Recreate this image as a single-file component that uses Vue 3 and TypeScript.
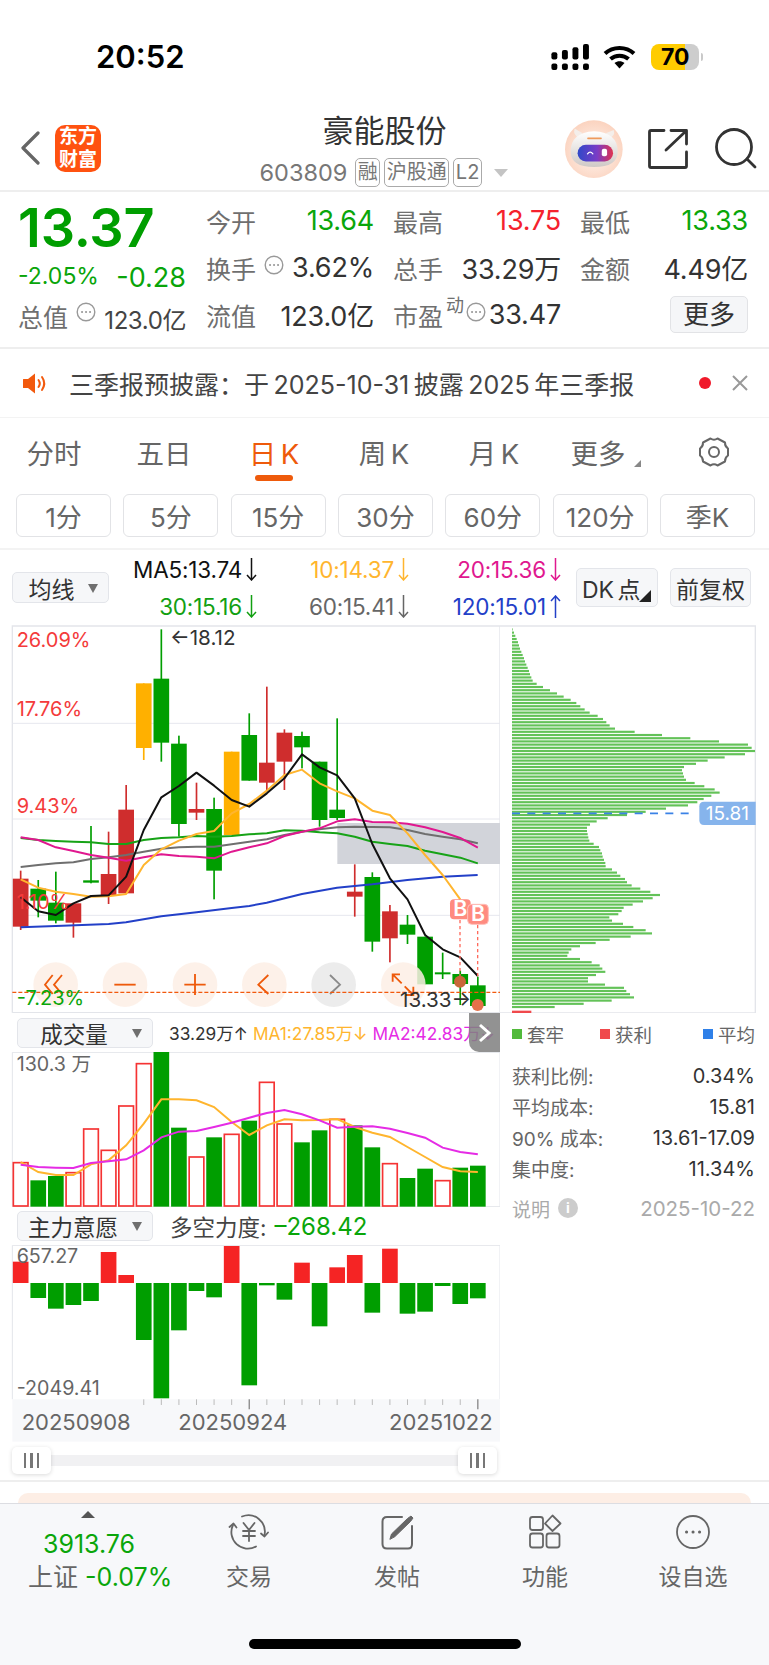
<script setup lang="ts">
// chart svgs use a 3x coordinate space (1500 units = 500px)
const xs = Array.from({ length: 27 }, (_, i) => 62 + i * 52.75)
const GREEN = '#009e00'
const RED = '#cf2d2d'
const ORANGE = '#ffb000'

// color, wick top, wick bottom, body top, body bottom
const candleData: [string, number, number, number, number][] = [
  [RED, 752, 930, 776, 920], [GREEN, 780, 892, 806, 842], [GREEN, 755, 910, 848, 902],
  [RED, 850, 953, 850, 908], [GREEN, 618, 790, 781, 788], [RED, 635, 852, 762, 828],
  [RED, 495, 820, 569, 820], [ORANGE, 190, 420, 190, 384], [GREEN, 28, 425, 176, 368],
  [GREEN, 347, 650, 371, 612], [RED, 488, 600, 567, 578], [GREEN, 533, 838, 567, 752],
  [ORANGE, 395, 645, 395, 645], [GREEN, 280, 482, 345, 482], [RED, 200, 510, 428, 488],
  [RED, 328, 510, 338, 425], [GREEN, 335, 445, 348, 382], [GREEN, 425, 620, 425, 600],
  [GREEN, 295, 600, 569, 594], [RED, 733, 890, 815, 830], [GREEN, 757, 995, 771, 965],
  [RED, 855, 1027, 874, 955], [GREEN, 885, 972, 914, 944], [GREEN, 950, 1093, 950, 1093],
  [GREEN, 998, 1077, 1057, 1063], [GREEN, 1052, 1155, 1062, 1092], [GREEN, 1070, 1160, 1096, 1158],
]
const candles = candleData.map((c, i) => ({ x: xs[i], color: c[0], wt: c[1], wb: c[2], bt: c[3], bb: c[4] }))

function line(vals: number[]) {
  return vals.map((v, i) => `${xs[i]},${v}`).join(' ')
}

const maLines = [
  { color: '#6f6f6f', pts: line([741, 735, 730, 727, 717, 712, 705, 695, 686, 682, 680, 680, 673, 665, 658, 645, 635, 628, 622, 620, 621, 622, 630, 642, 650, 658, 670]) },
  { color: '#17a317', pts: line([654, 660, 663, 665, 667, 672, 672, 660, 654, 652, 648, 650, 648, 643, 640, 631, 632, 637, 640, 650, 665, 672, 678, 692, 703, 713, 730]) },
  { color: '#e0188f', pts: line([652, 660, 682, 693, 705, 713, 722, 712, 703, 708, 710, 715, 695, 682, 670, 648, 635, 625, 604, 598, 606, 607, 611, 622, 636, 654, 683]) },
  { color: '#2340c8', pts: '62,922 167,918 326,912 378,907 484,889 590,877 695,864 748,858 800,848 906,822 1011,803 1117,793 1222,780 1328,770 1433,765' },
  { color: '#ffb52e', pts: line([778, 803, 815, 822, 830, 829, 822, 735, 688, 662, 642, 633, 580, 552, 512, 465, 449, 490, 514, 535, 572, 585, 640, 705, 765, 838]) },
  { color: '#111111', pts: line([832, 874, 885, 850, 828, 826, 770, 630, 532, 498, 458, 497, 540, 560, 520, 475, 403, 442, 466, 535, 672, 775, 838, 945, 988, 1012, 1068]) },
]

const roundBtns = [
  { cx: 167, fill: '#fdeee5' }, { cx: 375, fill: '#fdeee5' }, { cx: 585, fill: '#fdeee5' },
  { cx: 793, fill: '#fdeee5' }, { cx: 1001, fill: '#e9e9e9' }, { cx: 1210, fill: '#fdeee5' },
]

// false = green filled, true = red outline
const volTops = [457, 510, 497, 487, 356, 420, 287, 160, 125, 352, 440, 381, 372, 331, 216, 341, 396, 360, 327, 345, 411, 460, 503, 475, 511, 472, 466]
const volRed = [1, 0, 0, 1, 1, 1, 1, 1, 0, 0, 1, 0, 1, 0, 1, 1, 0, 0, 1, 0, 0, 1, 0, 0, 1, 0, 0]
const volBars = volTops.map((t, i) => ({ x: xs[i], top: t, red: !!volRed[i] }))
const volMa1 = line([455, 485, 494, 494, 462, 450, 405, 340, 267, 267, 270, 290, 335, 374, 345, 327, 330, 329, 326, 350, 367, 380, 410, 440, 470, 483, 485])
const volMa2 = line([463, 470, 472, 473, 458, 453, 447, 420, 381, 364, 362, 350, 337, 322, 308, 299, 312, 330, 352, 349, 348, 355, 368, 382, 412, 425, 432])

const ZERO = 249
const forceVals = [185, 294, 326, 315, 303, 156, 225, 420, 595, 391, 273, 292, 138, 556, 256, 299, 188, 379, 202, 165, 338, 146, 341, 335, 258, 312, 295]
const forceBars = forceVals.map((v, i) => ({ x: xs[i], y: Math.min(v, ZERO), h: Math.abs(v - ZERO), up: v < ZERO }))
const ticks = xs.slice(7).map((x) => ({ x, major: x === xs[13] || x === xs[26] }))

const chipEnds = [38, 42, 46, 50, 54, 57, 60, 64, 68, 72, 75, 79, 83, 87, 90, 94, 98, 110, 129, 150, 171, 191, 212, 229, 241, 254, 269, 293, 309, 319, 329, 345, 404, 486, 571, 657, 744, 755, 765, 735, 674, 623, 588, 552, 546, 549, 552, 558, 584, 613, 644, 659, 634, 611, 592, 564, 498, 437, 381, 323, 290, 270, 261, 261, 263, 265, 268, 281, 297, 301, 306, 308, 312, 316, 317, 336, 351, 361, 375, 381, 395, 421, 451, 480, 458, 429, 398, 371, 365, 355, 328, 336, 369, 400, 437, 456, 392, 329, 287, 240, 214, 206, 202, 240, 275, 299, 307, 316, 288, 264, 264, 315, 372, 379, 390, 402, 335, 251, 164]
const chips = chipEnds.map((e, i) => ({ y: 25 + i * 9.6, w: e - 36 }))

const maRows = [
  { text: 'MA5:13.74', color: '#111', down: true },
  { text: '10:14.37', color: '#ffb52e', down: true },
  { text: '20:15.36', color: '#e0188f', down: true },
  { text: '30:15.16', color: '#12a012', down: true },
  { text: '60:15.41', color: '#666', down: true },
  { text: '120:15.01', color: '#2340c8', down: false },
]
const tabs = ['分时', '五日', '日 K', '周 K', '月 K']
const periods = ['1分', '5分', '15分', '30分', '60分', '120分', '季K']
const infoRows = [
  { k: '获利比例:', v: '0.34%' },
  { k: '平均成本:', v: '15.81' },
  { k: '90% 成本:', v: '13.61-17.09' },
  { k: '集中度:', v: '11.34%' },
]
</script>

<template>
  <div class="page">
    <div class="status">
      <span class="time">20:52</span>
      <div class="status-right">
        <svg width="38" height="26" viewBox="33 27 113 79" fill="#000">
          <rect x="33" y="86" width="18" height="20" rx="6" /><rect x="65" y="86" width="18" height="20" rx="6" />
          <rect x="97" y="86" width="18" height="20" rx="6" /><rect x="129" y="86" width="18" height="20" rx="6" />
          <rect x="33" y="52" width="18" height="22" rx="6" /><rect x="65" y="45" width="18" height="29" rx="6" />
          <rect x="97" y="37" width="18" height="37" rx="6" /><rect x="129" y="27" width="18" height="47" rx="6" />
        </svg>
        <svg class="wifi" width="33" height="24" viewBox="0 0 33 24" fill="none" stroke="#000" stroke-width="4">
          <path d="M2 8.5C10 1 23 1 31 8.5" />
          <path d="M7.5 14C12.5 9.5 20.5 9.5 25.5 14" />
          <path d="M16.5 23.5L11.5 18C14.5 15.7 18.5 15.7 21.5 18Z" fill="#000" stroke="none" />
        </svg>
        <div class="battery"><span>70</span></div>
        <i class="bat-cap"></i>
      </div>
    </div>

    <div class="nav">
      <div class="nav-left">
        <svg width="19" height="34" viewBox="0 0 19 34" fill="none" stroke="#666" stroke-width="3.2" stroke-linecap="round" stroke-linejoin="round">
          <path d="M17 2L2 17L17 32" />
        </svg>
        <div class="logo"><span>东方</span><span>财富</span></div>
      </div>
      <div class="nav-title">
        <div class="title">豪能股份</div>
        <div class="sub">
          <span class="code">603809</span>
          <span class="tag">融</span>
          <span class="tag">沪股通</span>
          <span class="tag">L2</span>
          <i class="sub-caret"></i>
        </div>
      </div>
      <div class="nav-right">
        <svg width="58" height="58" viewBox="75 250 175 175">
          <defs>
            <radialGradient id="robotBg" cx="50%" cy="55%" r="55%">
              <stop offset="0%" stop-color="#fff6f1" />
              <stop offset="100%" stop-color="#fbd3bf" />
            </radialGradient>
            <linearGradient id="visor" x1="0" x2="1" y1="0" y2="0">
              <stop offset="0%" stop-color="#2f49c9" />
              <stop offset="55%" stop-color="#7a3cc6" />
              <stop offset="100%" stop-color="#e0324f" />
            </linearGradient>
            <linearGradient id="robotHead" x1="0" x2="0" y1="0" y2="1">
              <stop offset="0%" stop-color="#ffffff" />
              <stop offset="100%" stop-color="#cfc9c6" />
            </linearGradient>
          </defs>
          <circle cx="162" cy="338" r="87" fill="url(#robotBg)" />
          <path d="M104 276Q98 296 118 304L128 290ZM222 280Q228 298 208 304L198 290Z" fill="#f4eeea" />
          <path d="M92 345Q92 288 163 284Q234 288 234 345Q234 392 163 392Q92 392 92 345Z" fill="url(#robotHead)" />
          <rect x="142" y="303" width="44" height="5" rx="2" fill="#ef9a5c" />
          <rect x="113" y="325" width="107" height="50" rx="25" fill="url(#visor)" />
          <path d="M143 352Q151 342 159 352" fill="none" stroke="#fff" stroke-width="4" stroke-linecap="round" />
          <rect x="186" y="337" width="16" height="22" rx="6" fill="#fff" />
        </svg>
        <svg class="share" width="40" height="40" viewBox="0 0 40 40" fill="none" stroke="#333" stroke-width="2.8" stroke-linecap="round" stroke-linejoin="round">
          <path d="M16 1.5H3Q1.5 1.5 1.5 3V37Q1.5 38.5 3 38.5H37Q38.5 38.5 38.5 37V23" />
          <path d="M18 21L38 2M23 1.5H38.5V15" />
        </svg>
        <svg class="search" width="44" height="42" viewBox="0 0 44 42" fill="none" stroke="#333" stroke-width="2.8" stroke-linecap="round">
          <circle cx="20" cy="19" r="17.5" />
          <path d="M33 31L41 39" />
        </svg>
      </div>
    </div>

    <div class="quote">
      <div class="q-left">
        <div class="price">13.37</div>
        <div class="q-change"><span class="pct">-2.05%</span><span class="chg">-0.28</span></div>
        <div class="q-total">
          <span class="lab">总值</span>
          <svg class="dots" width="20" height="20" viewBox="0 0 20 20" fill="none" stroke="#999" stroke-width="1.4"><circle cx="10" cy="10" r="8.8" /><path d="M6 10h.1M10 10h.1M14 10h.1" stroke-width="2" stroke-linecap="round" /></svg>
          <span class="total-val">123.0亿</span>
        </div>
      </div>
      <div class="q-grid">
        <div class="cell"><span class="lab">今开</span><span class="val green">13.64</span></div>
        <div class="cell"><span class="lab">最高</span><span class="val red">13.75</span></div>
        <div class="cell"><span class="lab">最低</span><span class="val green">13.33</span></div>
        <div class="cell">
          <span class="lab with-icon">换手
            <svg class="dots" width="20" height="20" viewBox="0 0 20 20" fill="none" stroke="#999" stroke-width="1.4"><circle cx="10" cy="10" r="8.8" /><path d="M6 10h.1M10 10h.1M14 10h.1" stroke-width="2" stroke-linecap="round" /></svg>
          </span>
          <span class="val">3.62%</span>
        </div>
        <div class="cell"><span class="lab">总手</span><span class="val">33.29万</span></div>
        <div class="cell"><span class="lab">金额</span><span class="val">4.49亿</span></div>
        <div class="cell"><span class="lab">流值</span><span class="val">123.0亿</span></div>
        <div class="cell">
          <span class="lab with-icon tight">市盈<sup class="dyn">动</sup>
            <svg class="dots" width="20" height="20" viewBox="0 0 20 20" fill="none" stroke="#999" stroke-width="1.4"><circle cx="10" cy="10" r="8.8" /><path d="M6 10h.1M10 10h.1M14 10h.1" stroke-width="2" stroke-linecap="round" /></svg>
          </span>
          <span class="val">33.47</span>
        </div>
        <div class="cell end"><button class="more">更多</button></div>
      </div>
    </div>

    <div class="notice">
      <svg width="26" height="21" viewBox="0 0 26 21" fill="#f2590d" class="speaker">
        <path d="M1 6.5Q1 6 1.5 6H6L13 .5V20.5L6 15H1.5Q1 15 1 14.5Z" />
        <path d="M16.5 7Q19 10.5 16.5 14M20 4Q24.5 10.5 20 17" fill="none" stroke="#f2590d" stroke-width="2" stroke-linecap="round" />
      </svg>
      <span class="notice-text">三季报预披露：于 2025-10-31 披露 2025 年三季报</span>
      <i class="red-dot"></i>
      <svg width="16" height="16" viewBox="0 0 16 16" stroke="#999" stroke-width="2" class="close"><path d="M1 1L15 15M15 1L1 15" /></svg>
    </div>

    <div class="tabs">
      <div v-for="(t, i) in tabs" :key="t" class="tab" :class="{ active: i === 2 }">
        <span>{{ t }}</span>
      </div>
      <div class="tab">
        <span class="tab-more">更多</span><i class="tab-caret"></i>
      </div>
      <div class="tab">
        <svg width="32" height="32" viewBox="0 0 32 32" fill="none" stroke="#666" stroke-width="2" stroke-linejoin="round">
          <path d="M12.5 2.5Q16 5 19.5 2.5L27 6.5Q26.8 10.5 30 12.5V19.5Q26.8 21.5 27 25.5L19.5 29.5Q16 27 12.5 29.5L5 25.5Q5.2 21.5 2 19.5V12.5Q5.2 10.5 5 6.5Z" />
          <circle cx="16" cy="16" r="5" />
        </svg>
      </div>
    </div>

    <div class="periods">
      <button v-for="p in periods" :key="p" class="period">{{ p }}</button>
    </div>

    <div class="ma-bar">
      <div class="sel ma-sel"><span>均线</span><i class="caret"></i></div>
      <div class="ma-grid">
        <span v-for="m in maRows" :key="m.text" class="ma-item" :style="{ color: m.color }">
          {{ m.text }}
          <svg width="11" height="23" viewBox="0 0 11 23" fill="none" :stroke="m.color" stroke-width="1.5">
            <path v-if="m.down" d="M5.5 0V22M1 17L5.5 22L10 17" />
            <path v-else d="M5.5 23V1M1 6L5.5 1L10 6" />
          </svg>
        </span>
      </div>
      <div class="sel dk"><span>DK 点</span><i class="corner"></i></div>
      <div class="sel fq"><span>前复权</span></div>
    </div>

    <div class="charts">
      <div class="charts-left">
        <svg class="main-chart" width="500" height="393.33" viewBox="0 0 1500 1180">
          <path d="M37 1178V18H1500V1178M37 1178H1500" fill="none" stroke="#e3e5ea" stroke-width="4" />
          <path d="M37 310H1500M37 597H1500M37 886H1500" stroke="#e6e7ee" stroke-width="3" />
          <rect x="1012" y="609" width="488" height="123" fill="#d2d4da" />
          <g v-for="c in candles" :key="c.x">
            <rect :x="c.x - 2.5" :y="c.wt" width="5" :height="c.wb - c.wt" :fill="c.color" />
            <rect :x="c.x - 23.5" :y="c.bt" width="47" :height="c.bb - c.bt" :fill="c.color" />
          </g>
          <polyline v-for="l in maLines" :key="l.color" :points="l.pts" fill="none" :stroke="l.color" stroke-width="6" stroke-linejoin="round" />

          <text x="50" y="80" class="pct-red">26.09%</text>
          <text x="50" y="288" class="pct-red">17.76%</text>
          <text x="50" y="578" class="pct-red">9.43%</text>
          <text x="50" y="868" class="pct-red">1.10%</text>
          <text x="510" y="74" class="price-note">←18.12</text>

          <g v-for="b in roundBtns" :key="b.cx">
            <circle :cx="b.cx" cy="1094" r="67" :fill="b.fill" opacity=".85" />
          </g>
          <g fill="none" stroke="#ee5a0b" stroke-width="5.5">
            <path d="M158 1065L135 1094L158 1122M186 1065L162 1094L186 1122" />
            <path d="M343 1094H407" />
            <path d="M553 1094H617M585 1062V1125" />
            <path d="M805 1065L775 1094L805 1122" />
            <path d="M1178 1085V1063H1200M1178 1063L1205 1090M1240 1100V1125H1216M1240 1125L1214 1099" />
          </g>
          <path d="M990 1065L1020 1094L990 1122" fill="none" stroke="#8a8a8a" stroke-width="5.5" />

          <path d="M37 1117H1500" stroke="#f2590d" stroke-width="4" stroke-dasharray="12 6" />
          <path d="M1380 900V1085M1433 915V1070" stroke="#ff6a5c" stroke-width="4" stroke-dasharray="10 8" />
          <circle cx="1380" cy="1085" r="18" fill="#c9673a" />
          <circle cx="1433" cy="1155" r="18" fill="#e5714a" />
          <rect x="1350" y="838" width="62" height="60" rx="12" fill="#ff8b80" />
          <rect x="1403" y="853" width="62" height="60" rx="12" fill="#ff8b80" stroke="#ffc0ba" stroke-width="3" />
          <text x="1381" y="888" class="bb">B</text>
          <text x="1434" y="904" class="bb">B</text>
          <text x="50" y="1155" class="pct-green">-7.23%</text>
          <text x="1200" y="1162" class="price-note">13.33→</text>
        </svg>

        <div class="sub-head vol-head">
          <div class="sel sub-sel"><span>成交量</span><i class="caret"></i></div>
          <span class="vol-t dark">33.29万↑</span>
          <span class="vol-t amber">MA1:27.85万↓</span>
          <span class="vol-t pink">MA2:42.83万↓</span>
          <div class="expand">
            <svg width="14" height="20" viewBox="0 0 14 20" fill="none" stroke="#fff" stroke-width="3"><path d="M2 2L11 10L2 18" /></svg>
          </div>
        </div>
        <svg class="vol-chart" width="500" height="155" viewBox="0 125 1500 465">
          <path d="M37 589V126H1500V589H37" fill="none" stroke="#e3e5ea" stroke-width="3" />
          <g v-for="b in volBars" :key="b.x">
            <rect v-if="b.red" :x="b.x - 22" :y="b.top" width="44" :height="587 - b.top" fill="#fff" stroke="#f53333" stroke-width="5" />
            <rect v-else :x="b.x - 23.5" :y="b.top" width="47" :height="589 - b.top" :fill="GREEN" />
          </g>
          <polyline :points="volMa1" fill="none" stroke="#ffb52e" stroke-width="6" />
          <polyline :points="volMa2" fill="none" stroke="#e52be5" stroke-width="6" />
          <text x="50" y="183" class="axis">130.3 万</text>
        </svg>

        <div class="sub-head force-head">
          <div class="sel sub-sel force-sel"><span>主力意愿</span><i class="caret"></i></div>
          <span class="force-t">多空力度:</span>
          <span class="force-v">–268.42</span>
        </div>
        <svg class="force-chart" width="500" height="196.67" viewBox="0 135 1500 590">
          <path d="M37 598V136H1500V598" fill="none" stroke="#e3e5ea" stroke-width="3" />
          <rect v-for="b in forceBars" :key="b.x" :x="b.x - 23.5" :y="b.y" width="47" :height="b.h" :fill="b.up ? '#f52424' : GREEN" />
          <rect x="37" y="598" width="1463" height="127" fill="#f7f8fa" />
          <path v-for="t in ticks" :key="t.x" :d="`M${t.x} 598V${t.major ? 628 : 615}`" :stroke="t.major ? '#888' : '#bbb'" :stroke-width="t.major ? 4 : 3" />
          <text x="50" y="190" class="axis">657.27</text>
          <text x="50" y="585" class="axis">-2049.41</text>
          <text x="65" y="690" class="date">20250908</text>
          <text x="535" y="690" class="date">20250924</text>
          <text x="1167" y="690" class="date">20251022</text>
        </svg>

        <div class="slider">
          <div class="handle"><i></i><i></i><i></i></div>
          <div class="handle"><i></i><i></i><i></i></div>
        </div>
      </div>

      <div class="charts-right">
        <svg class="chip-chart" width="269" height="393.33" viewBox="0 0 807 1180">
          <path d="M0 18H766V1179H0" fill="none" stroke="#e3e5ea" stroke-width="4" />
          <rect v-for="c in chips" :key="c.y" x="36" :y="c.y" :width="c.w" height="6.5" fill="#63c258" />
          <rect x="36" y="1172" width="58" height="7" fill="#f0494c" />
          <path d="M36 580H578" stroke="#3b82e6" stroke-width="5" stroke-dasharray="24 22" />
          <path d="M612 545H767V615H612Q598 615 598 601V559Q598 545 612 545Z" fill="#86b4ec" />
          <text x="682" y="600" class="chip-price">15.81</text>
        </svg>
        <div class="legend">
          <span class="leg"><i class="sq sq-green"></i>套牢</span>
          <span class="leg"><i class="sq sq-red"></i>获利</span>
          <span class="leg"><i class="sq sq-blue"></i>平均</span>
        </div>
        <div class="info">
          <div v-for="r in infoRows" :key="r.k" class="info-row"><span>{{ r.k }}</span><b>{{ r.v }}</b></div>
        </div>
        <div class="explain">
          <span>说明</span><i class="info-i">i</i><span class="explain-date">2025-10-22</span>
        </div>
      </div>
    </div>

    <div class="rule"></div>
    <div class="peach"></div>

    <div class="bottom">
      <div class="bottom-grid">
        <div class="index">
          <i class="up"></i>
          <span class="idx-v">3913.76</span>
          <span class="idx-n">上证 <em>-0.07%</em></span>
        </div>
        <div class="act">
          <svg width="44" height="40" viewBox="0 0 44 40" fill="none" stroke="#666" stroke-width="1.8" stroke-linecap="round" stroke-linejoin="round">
            <path d="M15 4.5A16.5 16.5 0 0 1 37.5 23M29 34.5A16.5 16.5 0 0 1 6 13" />
            <path d="M2.5 15L6.5 11.5L9.5 15.5M34 21.5L37.5 24.5L41 20.5" />
            <path d="M16.5 11L22 18L27.5 11M22 18V29M16 19H28M16 24H28" />
          </svg>
          <span>交易</span>
        </div>
        <div class="act">
          <svg width="40" height="40" viewBox="0 0 40 40" fill="none" stroke="#666" stroke-width="2" stroke-linecap="round">
            <path d="M25 5H10Q5.5 5 5.5 9.5V32Q5.5 36.5 10 36.5H31Q35 36.5 35 32V14" />
            <path d="M13 27L14.5 22L30.5 6.5L34 4L36 6L33.5 9.5L18 24.5Z" fill="#666" stroke-width="1" />
          </svg>
          <span>发帖</span>
        </div>
        <div class="act">
          <svg width="40" height="40" viewBox="0 0 40 40" fill="none" stroke="#666" stroke-width="1.8" stroke-linejoin="round">
            <rect x="5" y="5" width="13" height="13" rx="2.5" />
            <rect x="5" y="21.5" width="13" height="14" rx="2.5" />
            <rect x="21.5" y="21.5" width="13" height="14" rx="2.5" />
            <path d="M27.5 3.5L35.5 11.5L27.5 19L20 11.5Z" />
          </svg>
          <span>功能</span>
        </div>
        <div class="act">
          <svg width="40" height="40" viewBox="0 0 40 40" fill="none" stroke="#666" stroke-width="1.8">
            <circle cx="20" cy="20" r="16" />
            <path d="M13.5 20h.1M20 20h.1M26.5 20h.1" stroke-width="3" stroke-linecap="round" />
          </svg>
          <span>设自选</span>
        </div>
      </div>
      <div class="home"></div>
    </div>
  </div>
</template>

<style>
html,
body {
  margin: 0;
  background: #fff;
}
</style>

<style scoped>
.page {
  width: 769px;
  height: 1665px;
  overflow: hidden;
  background: #fff;
  font-family: Inter, "Noto Sans CJK SC", sans-serif;
  color: #333;
}
i {
  display: block;
  font-style: normal;
}
button {
  font: inherit;
  padding: 0;
}

/* status bar */
.status {
  height: 108px;
  box-sizing: border-box;
  padding: 38px 66px 0 96px;
  display: flex;
  justify-content: space-between;
  align-items: flex-start;
}
.time {
  font-size: 31px;
  font-weight: 600;
  line-height: 38px;
  color: #000;
}
.status-right {
  display: flex;
  align-items: center;
  height: 38px;
}
.wifi {
  margin-left: 14px;
}
.battery {
  margin-left: 15px;
  width: 48px;
  height: 26px;
  border-radius: 8px;
  background: linear-gradient(90deg, #ffcc00 71%, #cdcdcd 71%);
  font-size: 23px;
  font-weight: 700;
  line-height: 26px;
  color: #000;
  padding-left: 10px;
  box-sizing: border-box;
}
.bat-cap {
  width: 2px;
  height: 8px;
  margin-left: 2px;
  background: #c9c9c9;
  border-radius: 0 2px 2px 0;
}

/* nav */
.nav {
  height: 82px;
  display: grid;
  grid-template-columns: 1fr 250px 1fr;
  border-bottom: 2px solid #eeeeee;
}
.nav-left {
  display: flex;
  align-items: center;
  padding: 0 0 2px 21px;
  gap: 15px;
}
.logo {
  width: 46px;
  height: 47px;
  border-radius: 10px;
  background: #ff5210;
  color: #fff;
  font-size: 19px;
  font-weight: 700;
  line-height: 23px;
  display: flex;
  flex-direction: column;
  align-items: center;
  justify-content: center;
}
.nav-title {
  text-align: center;
}
.title {
  font-size: 31px;
  line-height: 46px;
  color: #333;
}
.sub {
  display: flex;
  align-items: center;
  justify-content: flex-start;
  gap: 4px;
  color: #777;
  margin-top: 4px;
  height: 29px;
}
.code {
  font-size: 23.5px;
  margin-right: 4px;
}
.tag {
  height: 27px;
  border: 1.5px solid #aaa;
  border-radius: 5px;
  padding: 0 1.5px;
  font-size: 20px;
  line-height: 27px;
}
.sub-caret {
  width: 0;
  height: 0;
  border: 7px solid transparent;
  border-top: 8px solid #c4c4c4;
  border-bottom: 0;
  margin-left: 8px;
}
.nav-right {
  display: flex;
  align-items: center;
  justify-content: flex-end;
  padding: 0 11px 0 0;
  margin-left: -4px;
}
.share {
  margin-left: 25px;
}
.search {
  margin-left: 26px;
}

/* quote */
.quote {
  height: 155px;
  border-bottom: 2px solid #eeeeee;
  display: flex;
  padding-left: 18px;
}
.q-left {
  width: 168px;
  margin-right: 20px;
  display: flex;
  flex-direction: column;
}
.price {
  font-size: 54px;
  font-weight: 600;
  color: #009e00;
  line-height: 60px;
  margin-top: 6px;
  height: 58px;
  letter-spacing: -0.2px;
}
.q-change {
  height: 40px;
  display: flex;
  justify-content: space-between;
  align-items: center;
  color: #09a509;
}
.pct {
  font-size: 23px;
}
.chg {
  font-size: 27px;
  margin-top: 3px;
}
.q-total {
  height: 36px;
  display: flex;
  align-items: center;
  margin-top: 2px;
}
.q-total .dots {
  margin-left: 8px;
  top: -4px;
}
.total-val {
  font-size: 24px;
  margin-left: auto;
  margin-top: 4px;
  color: #444;
  letter-spacing: -0.4px;
}
.lab {
  font-size: 25px;
  color: #6f6f6f;
  white-space: nowrap;
}
.with-icon {
  display: inline-flex;
  align-items: center;
  gap: 8px;
}
.with-icon.tight {
  gap: 2px;
}
.dots {
  position: relative;
  top: -3px;
  flex: none;
}
.dyn {
  font-size: 18px;
  line-height: 18px;
  position: relative;
  top: -9px;
  vertical-align: baseline;
  margin-left: 1px;
}
.q-grid {
  display: grid;
  grid-template-columns: repeat(3, 168px);
  grid-auto-rows: 47px;
  column-gap: 19px;
  padding-top: 5px;
}
.cell {
  display: flex;
  justify-content: space-between;
  align-items: center;
}
.cell.end {
  justify-content: flex-end;
}
.val {
  font-size: 27px;
  color: #333;
  white-space: nowrap;
  letter-spacing: -0.2px;
}
.val.green {
  color: #0aa60a;
}
.val.red {
  color: #f5222d;
}
.more {
  width: 78px;
  height: 37px;
  background: #f5f6f8;
  border: 1.5px solid #e2e3e6;
  border-radius: 5px;
  font-size: 26px;
  color: #333;
  line-height: 33px;
}

/* notice */
.notice {
  height: 68px;
  border-bottom: 1px solid #f3f3f3;
  display: flex;
  align-items: center;
  padding-left: 22px;
}
.notice-text {
  margin-left: 21px;
  width: 630px;
  font-size: 25px;
  word-spacing: -2.5px;
  color: #444;
  white-space: nowrap;
}
.red-dot {
  width: 12px;
  height: 12px;
  border-radius: 50%;
  background: #f0192a;
}
.close {
  margin-left: 21px;
}

/* tabs */
.tabs {
  height: 71px;
  display: grid;
  grid-template-columns: repeat(7, 110px);
  margin-left: -1px;
}
.tab {
  position: relative;
  display: flex;
  align-items: center;
  justify-content: center;
  font-size: 27.5px;
  word-spacing: -3px;
  color: #666;
  padding-bottom: 4px;
  box-sizing: border-box;
}
.tab.active {
  color: #ee5a0b;
}
.tab.active::after {
  content: "";
  position: absolute;
  left: 36px;
  width: 38px;
  height: 6px;
  bottom: 8px;
  border-radius: 3px;
  background: #ee5a0b;
}
.tab-more {
  margin-right: 12px;
}
.tab-caret {
  position: absolute;
  left: 85px;
  top: 42px;
  border-style: solid;
  border-width: 0 0 7px 7px;
  border-color: transparent transparent #888 transparent;
}

/* periods */
.periods {
  display: flex;
  gap: 12.33px;
  padding: 5px 0 0 16px;
  height: 43px;
}
.period {
  width: 95px;
  height: 43px;
  background: #fff;
  border: 1.5px solid #e2e3e6;
  border-radius: 6px;
  font-size: 26px;
  color: #666;
}

/* ma row */
.ma-bar {
  margin-top: 11px;
  height: 70px;
  border-top: 2px solid #f3f3f3;
  display: flex;
  align-items: flex-start;
  padding-left: 12px;
}
.sel {
  box-sizing: border-box;
  background: #f6f7f9;
  border: 1.5px solid #e3e5ea;
  border-radius: 5px;
  display: flex;
  align-items: center;
  justify-content: center;
  position: relative;
  color: #333;
  font-size: 23px;
}
.ma-sel {
  width: 97px;
  height: 31px;
  margin-top: 22px;
  padding-right: 18px;
}
.caret {
  position: absolute;
  right: 10px;
  top: 50%;
  margin-top: -4px;
  border-style: solid;
  border-width: 9px 5px 0;
  border-color: #6f6f6f transparent transparent;
}
.ma-grid {
  width: 442px;
  margin-left: 10px;
  display: grid;
  grid-template-columns: 138px 152px 152px;
  grid-auto-rows: 37px;
  padding-top: 1px;
}
.ma-item {
  display: flex;
  justify-content: flex-end;
  align-items: center;
  gap: 4px;
  font-size: 22.5px;
  white-space: nowrap;
  letter-spacing: -0.2px;
}
.dk {
  width: 82px;
  height: 39px;
  margin-top: 18px;
  margin-left: 15px;
  justify-content: flex-start;
  padding-left: 5px;
  word-spacing: -3px;
}
.corner {
  position: absolute;
  right: 6px;
  bottom: 4px;
  border-style: solid;
  border-width: 0 0 12px 12px;
  border-color: transparent transparent #222 transparent;
}
.fq {
  width: 81px;
  height: 39px;
  margin-top: 18px;
  margin-left: 12px;
}

/* charts */
.charts {
  display: flex;
  height: 860px;
}
.charts-left {
  width: 500px;
  flex: none;
}
.charts-left svg,
.charts-right svg {
  display: block;
}
.charts-right {
  width: 269px;
}
.pct-red,
.pct-green {
  font-size: 60px;
  fill: #f43b3b;
}
.pct-green {
  fill: #0aa60a;
}
.price-note {
  font-size: 62px;
  fill: #333;
}
.bb {
  font-size: 64px;
  font-weight: 600;
  fill: #fff;
  text-anchor: middle;
}
.sub-head {
  position: relative;
  display: flex;
  align-items: center;
  padding-left: 17px;
}
.vol-head {
  height: 39px;
}
.force-head {
  height: 38px;
}
.sub-sel {
  width: 136px;
  height: 30px;
  flex: none;
  font-size: 22.5px;
  padding-right: 22px;
}
.force-sel {
  padding-right: 24px;
}
.vol-t {
  font-size: 17.3px;
  white-space: nowrap;
  margin-left: 16px;
}
.vol-t + .vol-t {
  margin-left: 5px;
}
.dark {
  color: #333;
}
.amber {
  color: #ffb52e;
}
.pink {
  color: #e52be5;
}
.expand {
  position: absolute;
  right: 0;
  top: 0;
  width: 31px;
  height: 39px;
  background: rgba(128, 128, 128, 0.86);
  border-radius: 0 0 0 10px;
  display: flex;
  align-items: center;
  justify-content: center;
}
.axis {
  font-size: 59px;
  fill: #666;
}
.date {
  font-size: 66px;
  fill: #666;
}
.force-t {
  font-size: 22.5px;
  color: #444;
  margin-left: 17px;
}
.force-v {
  font-size: 24px;
  color: #0aa60a;
  margin-left: 8px;
}
.slider {
  margin-left: 12px;
  width: 485px;
  height: 38px;
  display: flex;
  align-items: center;
  justify-content: space-between;
  background: linear-gradient(#f1f1f3, #f1f1f3) center / 100% 11px no-repeat;
}
.handle {
  width: 39px;
  height: 27px;
  background: #fff;
  border-radius: 5px;
  box-shadow: 0 1px 4px rgba(0, 0, 0, 0.15);
  display: flex;
  align-items: center;
  justify-content: center;
  gap: 4px;
}
.handle i {
  width: 2.5px;
  height: 15px;
  background: #777;
}
.chip-price {
  font-size: 57px;
  fill: #fff;
  text-anchor: middle;
}

/* right info */
.legend {
  height: 42px;
  display: grid;
  grid-template-columns: 88px 103px 52px;
  align-items: center;
  padding-left: 12px;
  font-size: 18.5px;
  color: #666;
}
.leg {
  display: flex;
  align-items: center;
  gap: 5px;
}
.sq {
  width: 10px;
  height: 10px;
}
.sq-green {
  background: #52ba3b;
}
.sq-red {
  background: #f0494c;
}
.sq-blue {
  background: #2f80e8;
}
.info {
  margin-top: 5px;
  padding: 0 14px 0 12px;
}
.info-row {
  height: 31px;
  display: flex;
  align-items: center;
  justify-content: space-between;
  font-size: 19px;
  color: #666;
}
.info-row b {
  font-weight: 400;
  color: #333;
  font-size: 20px;
}
.explain {
  margin-top: 9px;
  height: 30px;
  padding: 0 14px 0 12px;
  display: flex;
  align-items: center;
  font-size: 19px;
  color: #aaa;
}
.info-i {
  width: 20px;
  height: 20px;
  border-radius: 50%;
  background: #ccc;
  color: #fff;
  font-size: 14px;
  font-weight: 700;
  line-height: 20px;
  text-align: center;
  margin-left: 8px;
}
.explain-date {
  margin-left: auto;
  font-size: 20.5px;
}
.rule {
  height: 2px;
  background: #eeeeee;
}
.peach {
  height: 10px;
  margin: 11px 18px 0;
  background: #fdeee5;
  border-radius: 14px 14px 0 0;
}

/* bottom */
.bottom {
  height: 162px;
  background: #f7f8fa;
  border-top: 1px solid #dcdde2;
  box-sizing: border-box;
}
.bottom-grid {
  height: 88px;
  display: grid;
  grid-template-columns: 152px repeat(4, 148px);
  padding-left: 23px;
}
.index {
  display: flex;
  flex-direction: column;
  align-items: flex-start;
}
.up {
  margin: 7px 0 0 58px;
  border-style: solid;
  border-width: 0 7px 7px;
  border-color: transparent transparent #555;
}
.idx-v {
  margin: 10px 0 0 20px;
  font-size: 25px;
  line-height: 32px;
  color: #0aa60a;
}
.idx-n {
  margin-left: 5px;
  font-size: 25px;
  line-height: 34px;
  color: #666;
  white-space: nowrap;
}
.idx-n em {
  font-style: normal;
  color: #0aa60a;
}
.act {
  display: flex;
  flex-direction: column;
  align-items: center;
  padding-top: 8px;
  font-size: 23px;
  color: #666;
}
.act span {
  margin-top: 11px;
  line-height: 28px;
}
.home {
  width: 272px;
  height: 10px;
  margin: 47px auto 0;
  background: #000;
  border-radius: 5px;
}
</style>
